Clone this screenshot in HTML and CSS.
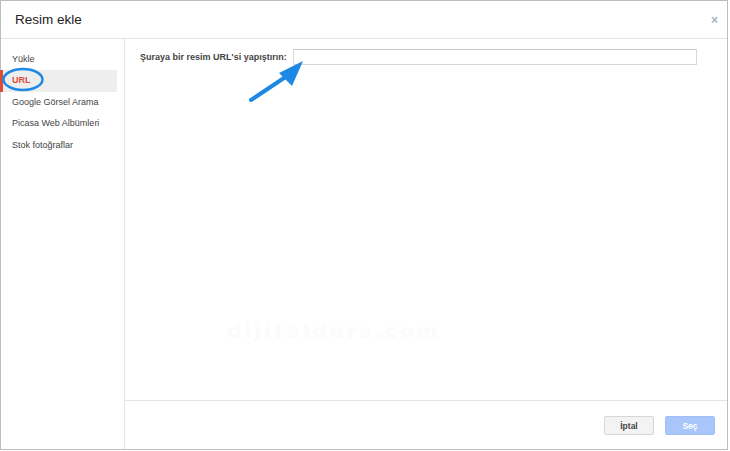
FILE: index.html
```html
<!DOCTYPE html>
<html lang="tr">
<head>
<meta charset="utf-8">
<title>Resim ekle</title>
<link rel="stylesheet" href="styles.css">
</head>
<body>
<div class="dialog">
  <div class="header">
    <div class="title">Resim ekle</div>
    <div class="close">×</div>
  </div>
  <div class="body">
    <ul class="sidebar">
      <li class="item">Yükle</li>
      <li class="item selected">URL</li>
      <li class="item">Google Görsel Arama</li>
      <li class="item">Picasa Web Albümleri</li>
      <li class="item">Stok fotoğraflar</li>
    </ul>
    <div class="content">
      <div class="main">
        <div class="url-row">
          <label class="label" for="url">Şuraya bir resim URL'si yapıştırın:</label>
          <input class="url-input" id="url" type="text">
        </div>
        <div class="watermark">dijitalders.com</div>
      </div>
      <div class="footer">
        <button class="btn btn-cancel">İptal</button>
        <button class="btn btn-select">Seç</button>
      </div>
    </div>
  </div>
  <svg class="annot" width="728" height="450" viewBox="0 0 728 450">
    <ellipse cx="23" cy="79.5" rx="19.5" ry="10.5" fill="none" stroke="#1e88e5" stroke-width="2.5"/>
    <line x1="251" y1="100" x2="287" y2="76" stroke="#1e88e5" stroke-width="4" stroke-linecap="round"/>
    <polygon points="303,61 279,73 292,86" fill="#1e88e5"/>
  </svg>
</div>
</body>
</html>
```

FILE: styles.css
```css
* { box-sizing: border-box; }

html, body {
  margin: 0;
  padding: 0;
  background: #fff;
}

body {
  font-family: "Liberation Sans", Arial, sans-serif;
  color: #333;
}

.dialog {
  position: relative;
  width: 728px;
  height: 450px;
  border: 1px solid #bdbdbd;
  background: #fff;
  display: flex;
  flex-direction: column;
}

.header {
  height: 38px;
  flex: none;
  border-bottom: 1px solid #e5e5e5;
  display: flex;
  align-items: center;
  justify-content: space-between;
  padding: 0 9px 0 14px;
}

.title {
  font-size: 13.5px;
  color: #222;
  padding-bottom: 1px;
}

.close {
  font-size: 12px;
  line-height: 1;
  color: #aab2c4;
  font-weight: bold;
}

.body {
  flex: 1;
  display: flex;
  min-height: 0;
}

.sidebar {
  list-style: none;
  margin: 0;
  width: 124px;
  flex: none;
  border-right: 1px solid #e5e5e5;
  padding: 9.5px 7px 0 0;
}

.item {
  height: 21.5px;
  line-height: 21.5px;
  font-size: 9px;
  color: #444;
  border-left: 3px solid transparent;
  margin-left: -1px;
  padding-left: 9px;
}

.item.selected {
  background: #eeeeee;
  color: #dd4b39;
  font-weight: bold;
  border-left-color: #dd4b39;
}

.content {
  flex: 1;
  display: flex;
  flex-direction: column;
  min-width: 0;
}

.main {
  flex: 1;
  position: relative;
  padding: 10px 0 0 15px;
}

.url-row {
  display: flex;
  align-items: center;
  gap: 6px;
}

.label {
  font-size: 9px;
  font-weight: bold;
  color: #444;
}

.url-input {
  width: 404px;
  height: 16px;
  border: 1px solid #d9d9d9;
  border-top-color: #c8c8c8;
  margin: 0;
  padding: 0 4px;
  font: inherit;
  font-size: 9px;
  outline: none;
}

.watermark {
  position: absolute;
  left: 102px;
  top: 280px;
  font-family: "DejaVu Sans", sans-serif;
  font-size: 20px;
  font-weight: bold;
  color: #fbfbfb;
  letter-spacing: 3px;
}

.footer {
  flex: none;
  height: 49px;
  border-top: 1px solid #e5e5e5;
  display: flex;
  justify-content: flex-end;
  align-items: flex-start;
  gap: 11px;
  padding: 15px 12px 0 0;
}

.btn {
  width: 50px;
  height: 19px;
  margin: 0;
  padding: 0;
  font-family: "Liberation Sans", Arial, sans-serif;
  font-size: 8.5px;
  font-weight: bold;
  border-radius: 2px;
}

.btn-cancel {
  background: #f3f3f3;
  border: 1px solid #d6d6d6;
  color: #444;
}

.btn-select {
  background: #a9c6fb;
  border: 1px solid #a3c0f6;
  color: #fff;
}

.annot {
  position: absolute;
  left: -1px;
  top: -1px;
  pointer-events: none;
}
```
